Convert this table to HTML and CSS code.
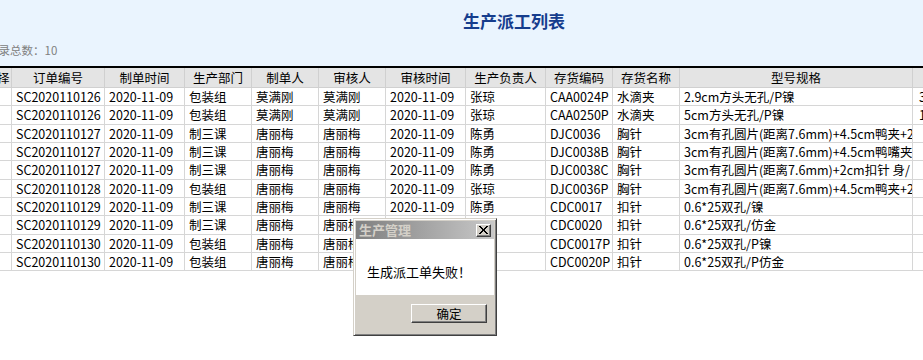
FILE: index.html
```html
<!DOCTYPE html>
<html lang="zh-CN">
<head>
<meta charset="utf-8">
<title>生产派工列表</title>
<link rel="stylesheet" href="styles.css">
</head>
<body>
<div class="page">
  <header class="head">
    <h1 class="title">生产派工列表</h1>
    <div class="count">记录总数：10</div>
  </header>
  <table class="grid">
    <colgroup>
      <col class="c-sel"><col class="c-no"><col class="c-date"><col class="c-dept"><col class="c-man"><col class="c-man">
      <col class="c-date"><col class="c-date"><col class="c-code"><col class="c-name"><col class="c-spec"><col class="c-qty">
    </colgroup>
    <thead>
      <tr><th>选择</th><th>订单编号</th><th>制单时间</th><th>生产部门</th><th>制单人</th><th>审核人</th><th>审核时间</th><th>生产负责人</th><th>存货编码</th><th>存货名称</th><th>型号规格</th><th>生产数量</th></tr>
    </thead>
    <tbody>
      <tr><td></td><td>SC2020110126</td><td>2020-11-09</td><td>包装组</td><td>莫满刚</td><td>莫满刚</td><td>2020-11-09</td><td>张琼</td><td>CAA0024P</td><td>水滴夹</td><td>2.9cm方头无孔/P镍</td><td>3000</td></tr>
      <tr><td></td><td>SC2020110126</td><td>2020-11-09</td><td>包装组</td><td>莫满刚</td><td>莫满刚</td><td>2020-11-09</td><td>张琼</td><td>CAA0250P</td><td>水滴夹</td><td>5cm方头无孔/P镍</td><td>1000</td></tr>
      <tr><td></td><td>SC2020110127</td><td>2020-11-09</td><td>制三课</td><td>唐丽梅</td><td>唐丽梅</td><td>2020-11-09</td><td>陈勇</td><td>DJC0036</td><td>胸针</td><td>3cm有孔圆片(距离7.6mm)+4.5cm鸭夹+2cm</td><td></td></tr>
      <tr><td></td><td>SC2020110127</td><td>2020-11-09</td><td>制三课</td><td>唐丽梅</td><td>唐丽梅</td><td>2020-11-09</td><td>陈勇</td><td>DJC0038B</td><td>胸针</td><td>3cm有孔圆片(距离7.6mm)+4.5cm鸭嘴夹</td><td></td></tr>
      <tr><td></td><td>SC2020110127</td><td>2020-11-09</td><td>制三课</td><td>唐丽梅</td><td>唐丽梅</td><td>2020-11-09</td><td>陈勇</td><td>DJC0038C</td><td>胸针</td><td>3cm有孔圆片(距离7.6mm)+2cm扣针 身/</td><td></td></tr>
      <tr><td></td><td>SC2020110128</td><td>2020-11-09</td><td>包装组</td><td>唐丽梅</td><td>唐丽梅</td><td>2020-11-09</td><td>张琼</td><td>DJC0036P</td><td>胸针</td><td>3cm有孔圆片(距离7.6mm)+4.5cm鸭夹+2cm</td><td></td></tr>
      <tr><td></td><td>SC2020110129</td><td>2020-11-09</td><td>制三课</td><td>唐丽梅</td><td>唐丽梅</td><td>2020-11-09</td><td>陈勇</td><td>CDC0017</td><td>扣针</td><td>0.6*25双孔/镍</td><td></td></tr>
      <tr><td></td><td>SC2020110129</td><td>2020-11-09</td><td>制三课</td><td>唐丽梅</td><td>唐丽梅</td><td>2020-11-09</td><td>陈勇</td><td>CDC0020</td><td>扣针</td><td>0.6*25双孔/仿金</td><td></td></tr>
      <tr><td></td><td>SC2020110130</td><td>2020-11-09</td><td>包装组</td><td>唐丽梅</td><td>唐丽梅</td><td>2020-11-09</td><td>张琼</td><td>CDC0017P</td><td>扣针</td><td>0.6*25双孔/P镍</td><td></td></tr>
      <tr><td></td><td>SC2020110130</td><td>2020-11-09</td><td>包装组</td><td>唐丽梅</td><td>唐丽梅</td><td>2020-11-09</td><td>张琼</td><td>CDC0020P</td><td>扣针</td><td>0.6*25双孔/P仿金</td><td></td></tr>
    </tbody>
  </table>
</div>

<div class="dialog">
  <div class="dlg-title">
    <span class="dlg-caption">生产管理</span>
    <span class="dlg-close">
      <svg width="9" height="8" viewBox="0 0 9 8"><path d="M0 0h2v1h1v1h1v1h1V2h1V1h1V0h2v1H8v1H7v1H6v2h1v1h1v1h1v1H7V7H6V6H5V5H4v1H3v1H2v1H0V7h1V6h1V5h1V3H2V2H1V1H0z" fill="#000"/></svg>
    </span>
  </div>
  <div class="dlg-body">生成派工单失败！</div>
  <div class="dlg-foot"><span class="dlg-btn">确定</span></div>
</div>
</body>
</html>
```

FILE: styles.css
```css
html, body {
  margin: 0;
  padding: 0;
  background: #ffffff;
  overflow: hidden;
}

body {
  font-family: "Noto Sans CJK SC", "Noto Sans", sans-serif;
  font-size: 12.5px;
  color: #000;
  width: 923px;
  height: 360px;
}

.page {
  margin-left: -14px;
  width: 1056px;
}

.head {
  background: #eaf4fe;
  height: 66px;
  box-sizing: border-box;
  padding-top: 9px;
}

.title {
  margin: 0;
  text-align: center;
  font-size: 17px;
  line-height: 24px;
  font-weight: bold;
  color: #163d8d;
}

.count {
  margin-top: 10px;
  font-size: 11.5px;
  line-height: 14px;
  color: #808080;
  padding-left: 1px;
}

.grid {
  border-collapse: collapse;
  table-layout: fixed;
  width: 1030px;
  margin-left: -4px;
  border-top: 2px solid #000;
}

.c-sel { width: 29px; }
.c-no { width: 93px; }
.c-date { width: 80px; }
.c-dept { width: 67px; }
.c-man { width: 67px; }
.c-code { width: 67px; }
.c-name { width: 67px; }
.c-spec { width: 233px; }
.c-qty { width: 100px; }

.grid th {
  background: #e4e4e4;
  font-weight: normal;
  height: 19px;
  padding: 0;
  text-align: center;
  border-left: 1px solid #d0d0d0;
  border-right: 1px solid #d0d0d0;
  border-bottom: 1px solid #d0d0d0;
  white-space: nowrap;
  overflow: hidden;
  line-height: 18px;
}

.grid td {
  height: 17.33px;
  padding: 0 0 0 4px;
  border: 1px solid #d6d6d6;
  white-space: nowrap;
  overflow: hidden;
  line-height: 17px;
}

.grid td:nth-child(12) {
  padding-left: 6px;
}

.dialog {
  position: absolute;
  left: 353px;
  top: 218px;
  width: 144px;
  height: 118px;
  box-sizing: border-box;
  background: #d4d0c8;
  border-top: 1px solid #d4d0c8;
  border-left: 1px solid #d4d0c8;
  border-right: 1px solid #404040;
  border-bottom: 1px solid #404040;
  box-shadow: inset 1px 1px 0 #ffffff, inset -1px -1px 0 #808080;
  padding: 2px 2px 3px 2px;
  display: flex;
  flex-direction: column;
}

.dlg-title {
  height: 18px;
  background: linear-gradient(to right, #808080, #c8c8c8);
  display: flex;
  align-items: center;
  justify-content: space-between;
  padding: 0 3px 0 3px;
  flex: none;
}

.dlg-caption {
  color: #d4d0c8;
  font-weight: bold;
  font-size: 13px;
  line-height: 18px;
}

.dlg-close {
  width: 15px;
  height: 13px;
  box-sizing: border-box;
  background: #d4d0c8;
  border-top: 1px solid #ffffff;
  border-left: 1px solid #ffffff;
  border-right: 1px solid #404040;
  border-bottom: 1px solid #404040;
  box-shadow: inset -1px -1px 0 #808080;
  display: flex;
  align-items: center;
  justify-content: center;
}

.dlg-body {
  background: #ffffff;
  height: 56px;
  flex: none;
  box-sizing: border-box;
  padding: 25px 0 0 11px;
  font-size: 13px;
  line-height: 16px;
}

.dlg-foot {
  flex: 1;
  display: flex;
  justify-content: flex-end;
  align-items: flex-start;
  padding: 9px 7px 0 0;
}

.dlg-btn {
  width: 76px;
  height: 19px;
  box-sizing: border-box;
  background: #d4d0c8;
  border-top: 1px solid #ffffff;
  border-left: 1px solid #ffffff;
  border-right: 1px solid #404040;
  border-bottom: 1px solid #404040;
  box-shadow: inset -1px -1px 0 #808080;
  text-align: center;
  font-size: 12.5px;
  line-height: 17px;
}
```
